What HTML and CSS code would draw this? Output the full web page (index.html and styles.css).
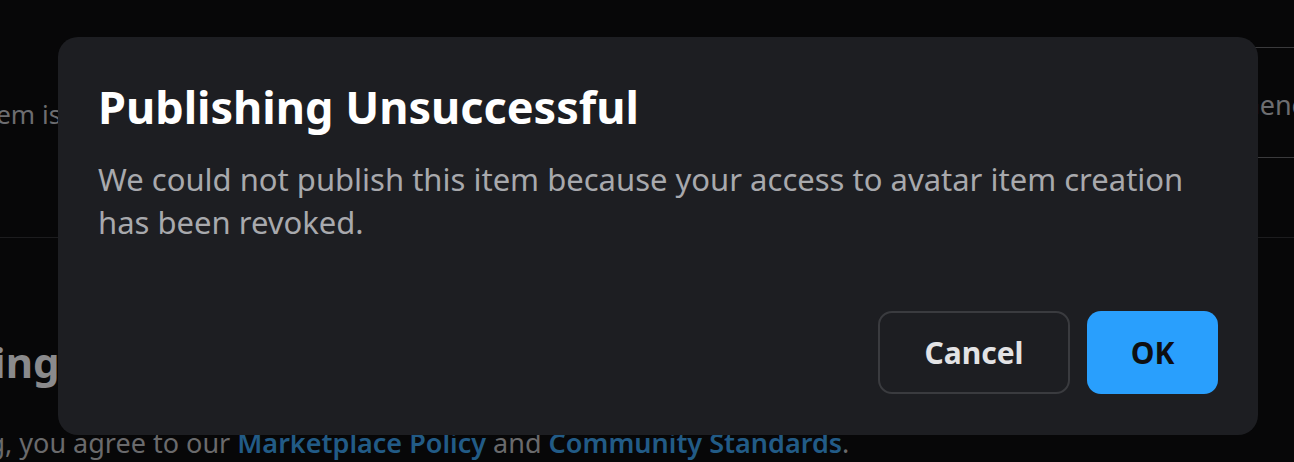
FILE: index.html
```html
<!DOCTYPE html>
<html lang="en">

<head>
  <meta charset="UTF-8">
  <meta name="viewport" content="width=device-width, initial-scale=1.0">
  <title>Publish Item</title>
  <link rel="stylesheet" href="styles.css">
</head>

<body>
  <!-- Page content behind the dialog -->
  <div class="page">
    <section class="summary">
      <p class="summary-note">Item is</p>
      <div class="summary-box">General</div>
    </section>

    <section class="publish">
      <h2 class="publish-title">Pricing</h2>
      <p class="terms">
        By publishing, you agree to our <a href="#">Marketplace Policy</a> and <a href="#">Community Standards</a>.
      </p>
    </section>
  </div>

  <!-- Modal -->
  <div class="overlay">
    <div class="dialog" role="dialog">
      <h1 class="dialog-title">Publishing Unsuccessful</h1>
      <p class="dialog-text">We could not publish this item because your access to avatar item creation has been revoked.</p>
      <div class="dialog-actions">
        <button class="btn btn-secondary">Cancel</button>
        <button class="btn btn-primary">OK</button>
      </div>
    </div>
  </div>
</body>

</html>
```

FILE: styles.css
```css
body {
  font-family: "Noto Sans", "Open Sans", sans-serif;
  margin: 0;
  background-color: #070708;
  color: #7a7a7c;
  overflow: hidden;
}

/* background page (already dimmed) */
.summary {
  display: flex;
  justify-content: space-between;
  height: 238px;
  border-bottom: 1px solid #1c1c1e;
  box-sizing: border-box;
}

.summary-note {
  margin: 96px 0 0 -22px;
  font-size: 26px;
  color: #6d6d70;
}

.summary-box {
  margin-top: 47px;
  width: 54px;
  height: 111px;
  border-top: 1px solid #3a3a3c;
  border-bottom: 1px solid #3a3a3c;
  font-size: 27px;
  color: #6d6d70;
  padding-top: 38px;
  box-sizing: border-box;
  overflow: hidden;
  white-space: nowrap;
}

.publish {
  padding-top: 95px;
}

.publish-title {
  margin: 0 0 0 -86px;
  font-size: 42px;
  font-weight: 700;
  color: #8a8a8c;
}

.terms {
  margin: 34px 0 0 -167px;
  font-size: 27px;
  color: #6a6a6c;
  white-space: nowrap;
}

.terms a {
  color: #225b86;
  font-weight: 600;
  text-decoration: none;
}

/* modal */
.overlay {
  position: fixed;
  inset: 0;
  padding: 37px 37px 0 58px;
}

.dialog {
  width: 1200px;
  box-sizing: border-box;
  padding: 40px 40px 41px;
  background-color: #1d1e22;
  border-radius: 20px;
}

.dialog-title {
  margin: 4px 0 0;
  font-size: 45px;
  line-height: 52px;
  font-weight: 700;
  color: #ffffff;
}

.dialog-text {
  margin: 25px 0 0;
  font-size: 31px;
  line-height: 43px;
  color: #a8a9ad;
}

.dialog-actions {
  display: flex;
  justify-content: flex-end;
  gap: 17px;
  margin-top: 67px;
}

.btn {
  height: 83px;
  border-radius: 14px;
  font-family: inherit;
  font-size: 30px;
  font-weight: 700;
  cursor: pointer;
}

.btn-secondary {
  width: 192px;
  background-color: transparent;
  border: 2px solid #3a3b3f;
  color: #e3e3e5;
}

.btn-primary {
  width: 131px;
  background-color: #299ffd;
  border: none;
  color: #0e0f12;
}
```
